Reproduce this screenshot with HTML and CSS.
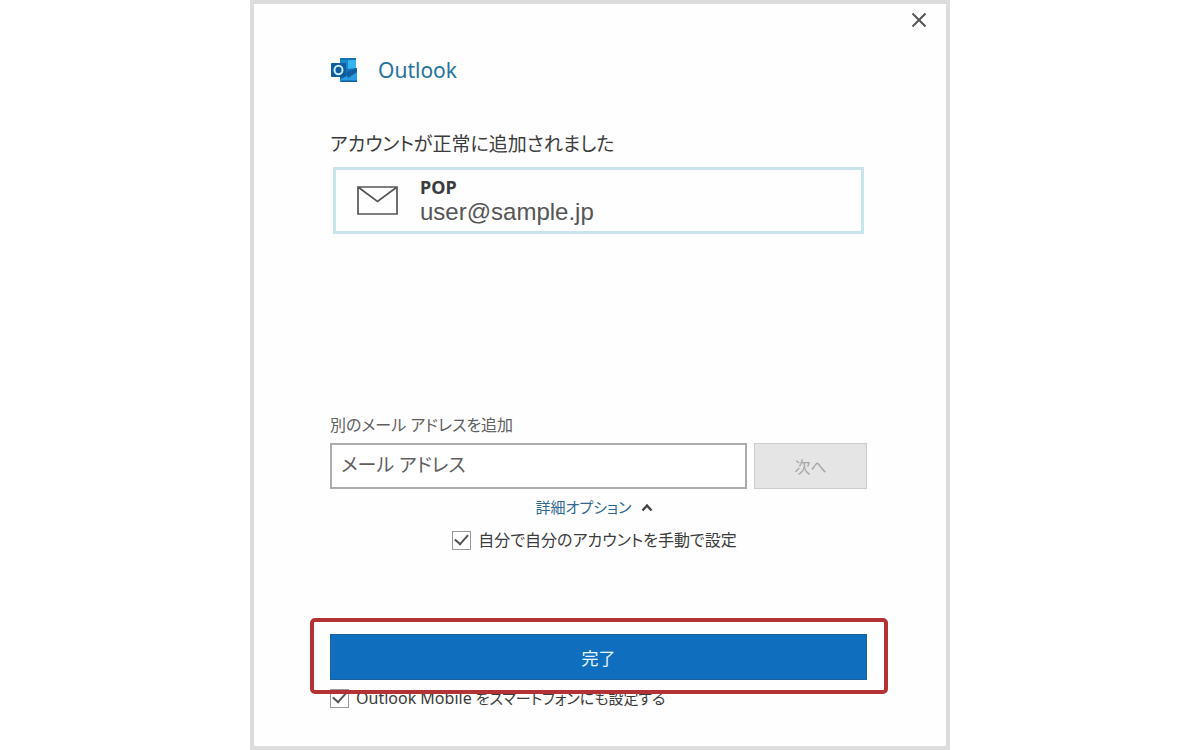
FILE: index.html
```html
<!DOCTYPE html>
<html lang="ja">
<head>
<meta charset="utf-8">
<meta name="viewport" content="width=device-width, initial-scale=1">
<title>Outlook</title>
<link rel="stylesheet" href="styles.css">
</head>
<body>
<main class="dialog">
  <div class="titlebar">
    <button class="close" type="button" aria-label="閉じる">
      <svg width="16" height="16" viewBox="0 0 16 16"><path d="M1.5 1.5 14.5 14.5M14.5 1.5 1.5 14.5" fill="none" stroke="#555" stroke-width="2"/></svg>
    </button>
  </div>
  <form class="content">
    <header class="brand">
      <svg class="logo" width="27" height="24" viewBox="0 0 27 24">
        <path d="M9 0H25V12H9Z" fill="#1b87cb"/>
        <path d="M9 0H25V2H9Z" fill="#1474b2"/>
        <path d="M17 2H25V12H17Z" fill="#35b4ee"/>
        <path d="M9 11H17L26 10V24H9Z" fill="#1470b8"/>
        <path d="M9 22 26 11V24H9Z" fill="#2a9be0"/>
        <path d="M15 15 26 10V14L17 20Z" fill="#125d9c"/>
        <path d="M10 22.5H26V24H10Z" fill="#135f9e"/>
        <rect x="0" y="5" width="15" height="14" rx="1" fill="#105d9e"/>
        <ellipse cx="7.5" cy="12" rx="4" ry="4.2" fill="none" stroke="#c9efff" stroke-width="2"/>
      </svg>
      <span class="brand-name">Outlook</span>
    </header>

    <h1 class="heading">アカウントが正常に追加されました</h1>
    <section class="account">
      <svg width="41" height="29" viewBox="0 0 41 29"><path d="M1 1H40V28H1ZM1 1 20.5 15.500 40 1" fill="none" stroke="#555" stroke-width="1.7"/></svg>
      <div class="account-text">
        <strong class="account-type">POP</strong>
        <span class="account-address">user@sample.jp</span>
      </div>
    </section>

    <label class="field-label" for="mail">別のメール アドレスを追加</label>
    <div class="field-row">
      <input class="field" id="mail" type="email" placeholder="メール アドレス">
      <button class="next" type="button" disabled>次へ</button>
    </div>

    <div class="options">
      <button class="details" type="button" aria-expanded="true">
        <span>詳細オプション</span>
        <svg width="12" height="9" viewBox="0 0 12 9"><path d="M1.500 7.500 6 2.500 10.500 7.500" fill="none" stroke="#444" stroke-width="2.400"/></svg>
      </button>
      <label class="check"><input class="box" type="checkbox" checked><span>自分で自分のアカウントを手動で設定</span></label>
    </div>

    <div class="finish-wrap">
      <button class="finish" type="submit">完了</button>
    </div>
    <label class="check mobile"><input class="box" type="checkbox" checked><span><span class="product">Outlook Mobile</span> をスマートフォンにも設定する</span></label>
  </form>
</main>
</body>
</html>
```
FILE: styles.css
```css
* {
  box-sizing: border-box;
}

body {
  margin: 0;
  background: #fff;
  color: #3c3c3c;
  font-family: "Noto Sans", "Noto Sans CJK JP", sans-serif;
  font-feature-settings: "palt";
}

button,
input {
  font-family: inherit;
  font-feature-settings: inherit;
}

button {
  padding: 0;
  border: 0;
  background: none;
}

svg {
  display: block;
}

.dialog {
  max-width: 700px;
  min-height: 100vh;
  margin: 0 auto;
  border: 4px solid #dcdcdc;
  background: #fefefe;
}

.titlebar {
  display: flex;
  justify-content: flex-end;
  padding: 8px 19px 0;
}

.content {
  display: flex;
  flex-direction: column;
  padding: 26px 79px 32px 76px;
}

.brand {
  display: flex;
  align-items: center;
  gap: 20px;
  height: 32px;
  padding-left: 1px;
}

.brand-name {
  color: #28739f;
  font-size: 21px;
  line-height: 32px;
}

.heading {
  margin: 44px 0 9px;
  font-size: 19px;
  font-weight: 400;
  line-height: 28px;
}

.account {
  display: flex;
  align-items: center;
  gap: 22px;
  min-height: 67px;
  margin: 0 3px;
  padding: 0 21px;
  border: 3px solid #cbe3ec;
}

.account-text {
  display: flex;
  flex-direction: column;
}

.account-type {
  font-size: 18px;
  line-height: 22px;
}

.account-address {
  color: #555;
  font-family: "Liberation Sans", Arial, sans-serif;
  font-size: 24px;
  line-height: 28px;
}

.field-label {
  margin-top: 179px;
  color: #606060;
  font-size: 16px;
  line-height: 24px;
}

.field-row {
  display: flex;
  gap: 7px;
  height: 46px;
  margin-top: 6px;
}

.field {
  flex: 1;
  min-width: 0;
  padding: 0 9px 3px;
  border: 2px solid #acacac;
  background: #fff;
  font-size: 19px;
}

.field::placeholder {
  color: #606060;
  opacity: 1;
}

.next {
  width: 113px;
  border: 1px solid #ccc;
  background: #e5e5e5;
  color: #a6a6a6;
  font-size: 16px;
}

.options {
  display: flex;
  flex-direction: column;
  align-items: center;
  gap: 9px;
  margin-top: 6px;
  padding-right: 8px;
}

.details {
  display: flex;
  align-items: center;
  gap: 10px;
  color: #2f6790;
  font-size: 15px;
  line-height: 24px;
}

.check {
  display: flex;
  align-items: center;
  gap: 7px;
  font-size: 16px;
  line-height: 24px;
}

.box {
  display: grid;
  place-items: center;
  appearance: none;
  width: 19px;
  height: 19px;
  margin: 0;
  border: 1px solid #999;
  background: #fff;
}

.box:checked::before {
  content: "";
  width: 11px;
  height: 6px;
  margin-bottom: 4px;
  border: solid #555;
  border-width: 0 0 2px 2px;
  transform: rotate(-48deg);
}

.finish-wrap {
  position: relative;
  z-index: 1;
  margin-top: 82px;
}

.finish-wrap::after {
  content: "";
  position: absolute;
  inset: -16px -21px -14px -20px;
  border: 4px solid #b23235;
  border-radius: 5px;
  pointer-events: none;
}

.finish {
  display: block;
  width: 100%;
  height: 46px;
  border: 1px solid #1c619c;
  background: #106ebe;
  color: #e4f7ff;
  font-size: 17px;
}

.mobile {
  margin-top: 6px;
  font-size: 15px;
}

.product {
  font-size: 16px;
}
```
